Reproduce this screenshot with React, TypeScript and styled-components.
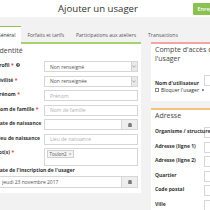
import React from "react";
import styled, { createGlobalStyle } from "styled-components";
import { FaQuestionCircle, FaCalendarAlt } from "react-icons/fa";

const GlobalStyle = createGlobalStyle`
  html, body { margin: 0; padding: 0; background: #f2f2f2; overflow: hidden; }
  body { font-family: "Open Sans", "DejaVu Sans", sans-serif; color: #333; width: 210px; height: 210px; }
  * { box-sizing: border-box; }
  input::placeholder { color: #b0b0b0; }
`;

const Page = styled.div`
  margin-left: -7px;
  width: 260px;
`;

const Header = styled.header`
  display: flex;
  align-items: center;
  height: 17px;
  background: #fff;
  padding-left: 65px;
  gap: 55px;
`;

const Title = styled.h1`
  margin: 0;
  font-size: 9.6px;
  line-height: 1;
  font-weight: 400;
  color: #333;
  white-space: nowrap;
`;

const SaveButton = styled.button`
  height: 12px;
  border: none;
  border-radius: 1px;
  background: #8cc152;
  color: #fff;
  font-family: inherit;
  font-size: 5.5px;
  font-weight: 600;
  padding: 0 4.5px;
  white-space: nowrap;
`;

const TabBar = styled.nav`
  display: flex;
  height: 16px;
  margin-top: 9px;
  margin-left: -2px;
  position: relative;
  z-index: 1;
`;

const Tab = styled.div<{ $active?: boolean }>`
  display: flex;
  align-items: center;
  padding: 0 6px ${(p) => (p.$active ? "2px" : "0")};
  font-size: 5px;
  white-space: nowrap;
  color: ${(p) => (p.$active ? "#333" : "#555")};
  background: ${(p) => (p.$active ? "#fff" : "transparent")};
  border-top: 1px solid ${(p) => (p.$active ? "#8cc152" : "transparent")};
  margin-bottom: ${(p) => (p.$active ? "-2px" : "0")};
`;

const Columns = styled.div`
  display: flex;
  align-items: flex-start;
  gap: 10px;
`;

const LeftPanel = styled.section`
  width: 148px;
  background: #fff;
  border-top: 2px solid #a8d06e;
  padding: 3px 3px 5px 3px;
`;

const RightColumn = styled.div`
  width: 85px;
  display: flex;
  flex-direction: column;
  gap: 7px;
`;

const Panel = styled.section<{ $accent: string; $pb: number }>`
  background: #fff;
  border-top: 2px solid ${(p) => p.$accent};
  padding: 2px 4px ${(p) => p.$pb}px 4px;
`;

const PanelHeading = styled.h2<{ $lh?: number; $mb?: number; $indent?: number }>`
  margin: 0 0 ${(p) => p.$mb ?? 6}px;
  padding-left: ${(p) => p.$indent ?? 0}px;
  font-size: 7px;
  line-height: ${(p) => p.$lh ?? 8}px;
  font-weight: 400;
  color: #444;
`;

const FormRow = styled.div<{ $cols: number; $mb?: number }>`
  display: grid;
  grid-template-columns: ${(p) => p.$cols}px 1fr;
  margin-bottom: ${(p) => p.$mb ?? 3.5}px;
`;

const Label = styled.label`
  display: flex;
  align-items: center;
  gap: 1px;
  font-size: 5px;
  font-weight: 700;
  line-height: 8px;
  height: 8px;
  color: #333;
  white-space: nowrap;
  position: relative;
  z-index: 1;
`;

const Required = styled.span`
  color: #e0473c;
  margin-left: 0.5px;
`;

const Help = styled(FaQuestionCircle)`
  width: 4px;
  height: 4px;
  color: #444;
  margin-left: 1px;
`;

const TextInput = styled.input<{ $h?: number }>`
  width: 100%;
  min-width: 0;
  height: ${(p) => p.$h ?? 11}px;
  border: 1px solid #d6d6d6;
  background: #fff;
  padding: 0 5px;
  font-family: inherit;
  font-size: 5px;
  color: #555;
  outline: none;
`;

const SelectBox = styled.div`
  display: flex;
  align-items: center;
  height: 11px;
  border: 1px solid #d6d6d6;
  padding-left: 5px;
  font-size: 5px;
  color: #555;
`;

const SelectText = styled.span`
  flex: 1;
  white-space: nowrap;
`;

const SelectArrow = styled.span`
  width: 6px;
  height: 9px;
  background: #e9e9e9;
  border-left: 1px solid #d0d0d0;
  margin-right: 0.5px;
  display: flex;
  align-items: center;
  justify-content: center;
`;

const InputGroup = styled.div<{ $h?: number }>`
  display: flex;
  height: ${(p) => p.$h ?? 11}px;
`;

const Addon = styled.span`
  width: 16px;
  flex: none;
  background: #eee;
  border: 1px solid #d6d6d6;
  border-left: none;
  display: flex;
  align-items: center;
  justify-content: center;
  color: #555;
`;

const MultiSelect = styled.div`
  display: flex;
  align-items: flex-start;
  height: 18px;
  border: 1px solid #d6d6d6;
  padding: 1px 1.5px;
`;

const Tag = styled.span`
  display: inline-flex;
  align-items: center;
  gap: 2px;
  height: 8px;
  padding: 0 2px;
  border: 1px solid #cfcfcf;
  background: #f4f4f4;
  font-size: 4.5px;
  color: #555;
`;

const TagClose = styled.span`
  color: #888;
`;

const BlockLabel = styled.div`
  font-size: 5px;
  font-weight: 700;
  line-height: 6px;
  margin-bottom: 3px;
  white-space: nowrap;
`;

const LabelColumn = styled.div`
  display: flex;
  flex-direction: column;
  padding-top: 4px;
`;

const CheckRow = styled.label`
  display: flex;
  align-items: center;
  gap: 2px;
  font-size: 5px;
  line-height: 6px;
  white-space: nowrap;
  color: #333;
`;

const CheckBox = styled.span`
  width: 4px;
  height: 4px;
  border: 1px solid #8a8a8a;
  background: #fff;
  flex: none;
`;

const Chevron = () => (
  <svg width="4" height="3" viewBox="0 0 4 3">
    <path d="M0.5 0.8 L2 2.2 L3.5 0.8" fill="none" stroke="#777" strokeWidth="0.6" />
  </svg>
);

const leftRows: { label: string; req?: boolean; help?: boolean; kind: "select" | "text" | "date"; value?: string; placeholder?: string }[] = [
  { label: "Profil", req: true, help: true, kind: "select", value: "Non renseigné" },
  { label: "Civilité", req: true, kind: "select", value: "Non renseignée" },
  { label: "Prénom", req: true, kind: "text", placeholder: "Prénom" },
  { label: "Nom de famille", req: true, kind: "text", placeholder: "Nom de famille" },
  { label: "Date de naissance", kind: "date" },
  { label: "Lieu de naissance", kind: "text", placeholder: "Lieu de naissance" },
];

const addressRows = ["Organisme / structure", "Adresse (ligne 1)", "Adresse (ligne 2)", "Quartier", "Code postal", "Ville"];

export default function App() {
  return (
    <>
      <GlobalStyle />
      <Page>
        <Header>
          <Title>Ajouter un usager</Title>
          <SaveButton>Enregistrer</SaveButton>
        </Header>
        <TabBar>
          <Tab $active>Général</Tab>
          <Tab>Forfaits et tarifs</Tab>
          <Tab>Participations aux ateliers</Tab>
          <Tab>Transactions</Tab>
        </TabBar>
        <Columns>
          <LeftPanel>
            <PanelHeading $indent={1.5}>Identité</PanelHeading>
            {leftRows.map((r) => (
              <FormRow $cols={48} key={r.label}>
                <Label>
                  {r.label}
                  {r.req && <Required>*</Required>}
                  {r.help && <Help />}
                </Label>
                {r.kind === "select" && (
                  <SelectBox>
                    <SelectText>{r.value}</SelectText>
                    <SelectArrow>
                      <Chevron />
                    </SelectArrow>
                  </SelectBox>
                )}
                {r.kind === "text" && <TextInput placeholder={r.placeholder} />}
                {r.kind === "date" && (
                  <InputGroup>
                    <TextInput />
                    <Addon>
                      <FaCalendarAlt size={4} />
                    </Addon>
                  </InputGroup>
                )}
              </FormRow>
            ))}
            <FormRow $cols={48} $mb={1}>
              <Label>
                Lot(s)<Required>*</Required>
              </Label>
              <MultiSelect>
                <Tag>
                  Toulon2<TagClose>×</TagClose>
                </Tag>
              </MultiSelect>
            </FormRow>
            <BlockLabel>Date de l'inscription de l'usager</BlockLabel>
            <InputGroup $h={12}>
              <TextInput $h={12} defaultValue="jeudi 23 novembre 2017" />
              <Addon>
                <FaCalendarAlt size={4} />
              </Addon>
            </InputGroup>
          </LeftPanel>
          <RightColumn>
            <Panel $accent="#f3a5a5" $pb={8}>
              <PanelHeading $lh={8.5} $mb={12}>Compte d'accès de l'usager</PanelHeading>
              <FormRow $cols={49} $mb={0}>
                <LabelColumn>
                  <Label as="span">Nom d'utilisateur</Label>
                  <CheckRow>
                    <CheckBox />
                    Bloquer l'usager
                    <Help />
                  </CheckRow>
                </LabelColumn>
                <TextInput placeholder="Nom d'utilisateur" />
              </FormRow>
            </Panel>
            <Panel $accent="#f5c27d" $pb={6}>
              <PanelHeading $mb={7}>Adresse</PanelHeading>
              {addressRows.map((a) => (
                <FormRow $cols={49} key={a}>
                  <Label>{a}</Label>
                  <TextInput placeholder={a} />
                </FormRow>
              ))}
            </Panel>
          </RightColumn>
        </Columns>
      </Page>
    </>
  );
}
